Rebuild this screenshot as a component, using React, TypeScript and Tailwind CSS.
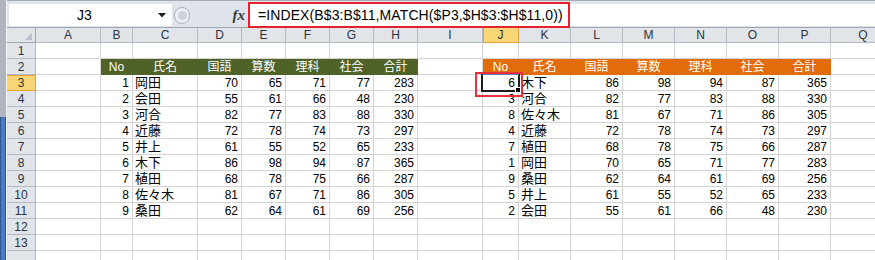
import React from 'react';

type Rec = [number, string, number, number, number, number, number];

const scores: Rec[] = [
  [1, '岡田', 70, 65, 71, 77, 283],
  [2, '会田', 55, 61, 66, 48, 230],
  [3, '河合', 82, 77, 83, 88, 330],
  [4, '近藤', 72, 78, 74, 73, 297],
  [5, '井上', 61, 55, 52, 65, 233],
  [6, '木下', 86, 98, 94, 87, 365],
  [7, '植田', 68, 78, 75, 66, 287],
  [8, '佐々木', 81, 67, 71, 86, 305],
  [9, '桑田', 62, 64, 61, 69, 256],
];

// right table = same data ordered by total
const ranked = [...scores].sort((a, b) => b[6] - a[6]);

const headers = ['No', '氏名', '国語', '算数', '理科', '社会', '合計'];
const columns = ['A', 'B', 'C', 'D', 'E', 'F', 'G', 'H', 'I', 'J', 'K', 'L', 'M', 'N', 'O', 'P', 'Q'];
const rows = [1, 2, 3, 4, 5, 6, 7, 8, 9, 10, 11, 12, 13, 14];

const ColHeader = ({ letter }: { letter: string }) => {
  const active = letter === 'J';
  return (
    <div
      className={`flex h-[15px] items-center justify-center border-r border-b text-[12px] leading-none text-[#2b3440] ${
        active
          ? 'border-[#e3a13a] bg-[#f8d675] shadow-[inset_1px_0_0_#e3a13a]'
          : 'border-[#b4bac3] bg-[#e1e5ea]'
      }`}
    >
      {letter}
    </div>
  );
};

const RowHeader = ({ n }: { n: number }) => {
  const active = n === 3;
  return (
    <div
      className={`flex h-[16px] items-center justify-center border-r border-b text-[12px] leading-none text-[#2b3440] ${
        active
          ? 'border-[#e3a13a] bg-[#f8d675] shadow-[inset_0_1px_0_#e3a13a]'
          : 'border-[#b4bac3] bg-[#e1e5ea]'
      }`}
    >
      {/* last row is cut by the window edge */}
      {n < 14 ? n : ''}
    </div>
  );
};

const Cell = ({ row, col }: { row: number; col: number }) => {
  let text: string | number = '';
  let kind: 'empty' | 'green' | 'orange' | 'num' | 'name' = 'empty';

  if (row === 2 && col >= 1 && col <= 7) {
    text = headers[col - 1];
    kind = 'green';
  } else if (row === 2 && col >= 9 && col <= 15) {
    text = headers[col - 9];
    kind = 'orange';
  } else if (row >= 3 && row <= 11 && col >= 1 && col <= 7) {
    text = scores[row - 3][col - 1];
    kind = col === 2 ? 'name' : 'num';
  } else if (row >= 3 && row <= 11 && col >= 9 && col <= 15) {
    text = ranked[row - 3][col - 9];
    kind = col === 10 ? 'name' : 'num';
  }

  const isActive = row === 3 && col === 9;

  let cls = 'h-[16px] border-r border-b whitespace-nowrap ';
  if (kind === 'green') {
    cls += 'flex items-center justify-center border-[#4f6228] bg-[#4f6228] text-[12px] text-white';
  } else if (kind === 'orange') {
    cls += 'flex items-center justify-center border-[#e26b0a] bg-[#e26b0a] text-[12px] text-white';
  } else if (kind === 'num') {
    cls += 'flex items-center justify-end border-[#d4d4d4] pr-[3px] pt-[1px] text-[12px] text-black';
  } else if (kind === 'name') {
    cls += 'flex items-center border-[#d4d4d4] pl-[2px] text-[13px] text-black';
  } else {
    cls += 'border-[#d4d4d4]';
  }
  if (isActive) cls += ' relative';

  return (
    <div className={cls}>
      {text}
      {isActive && (
        <>
          <div className="absolute -left-[2px] -top-[2px] z-10 h-[19px] w-[39px] border-2 border-[#1d1d1d] border-t-[#5a80b8]" />
          <div className="absolute -bottom-[3px] -right-[3px] z-10 h-[6px] w-[6px] border border-white bg-black" />
          <div className="absolute -left-[8px] -top-[3px] z-20 h-[25px] w-[48px] border-2 border-[#e8303a]" />
        </>
      )}
    </div>
  );
};

const App = () => {
  return (
    <div className="flex h-[260px] w-[875px] overflow-hidden bg-white font-['Liberation_Sans','Noto_Sans_CJK_JP',sans-serif]">
      {/* window edge */}
      <div className="flex w-[7px] shrink-0 flex-col border-r border-[#f2f4f7]">
        <div className="h-[117px] bg-[#aeb5bf]" />
        <div className="flex-1 border-x border-[#2d5592] bg-[#4c7cc2]" />
      </div>

      <div className="flex min-w-0 flex-1 flex-col">
        {/* ribbon bottom */}
        <div className="flex h-[5px] border-b border-[#a4acb6] bg-[#eef1f4]">
          <div className="w-[87px] border-r border-[#b8bec7]" />
          <div className="w-[253px] border-r border-[#b8bec7]" />
          <div className="w-[293px] border-r border-[#b8bec7]" />
          <div className="w-[143px] border-r border-[#b8bec7]" />
        </div>

        {/* formula bar */}
        <div className="relative flex h-[27px] border-b border-[#9da6b1] bg-[#dfe4ea] pt-[3px] pb-[1px]">
          <div className="ml-[2px] flex w-[163px] items-center bg-white">
            <span className="flex-1 pl-[2px] text-center text-[14px] text-black">J3</span>
            <svg width="8" height="5" viewBox="0 0 8 5" className="mr-[6px]">
              <path d="M0 0h8L4 4.5z" fill="#1f1f1f" />
            </svg>
          </div>
          <div className="flex w-[76px] items-center">
            <div className="ml-[2px] flex h-[17px] w-[16px] items-center justify-center rounded-full border border-[#a8b0ba] bg-[#eef1f4]">
              <div className="h-[9px] w-[9px] rounded-full bg-[#cdd3da]" />
            </div>
            <span className="ml-auto mr-[3px] font-['Liberation_Serif',serif] text-[15px] font-bold italic text-[#3a3a3a]">
              fx
            </span>
          </div>
          <div className="flex flex-1 items-center bg-white pl-[10px] text-[14px] tracking-[0.1px] text-black">
            =INDEX(B$3:B$11,MATCH($P3,$H$3:$H$11,0))
          </div>
          <div className="absolute left-[241px] top-[1px] h-[26px] w-[322px] border-2 border-[#e3222b]" />
        </div>

        {/* sheet */}
        <div className="grid w-max grid-cols-[29px_65px_32px_65px_44px_44px_44px_44px_44px_65px_36px_52px_52px_52px_52px_52px_52px_65px]">
          <div className="relative h-[15px] border-r border-b border-[#9ca5b0] bg-[#e1e5ea]">
            <svg width="7" height="7" viewBox="0 0 7 7" className="absolute bottom-[2px] right-[3px]">
              <path d="M7 0V7H0z" fill="#b9c0c9" />
            </svg>
          </div>
          {columns.map((c) => (
            <ColHeader key={c} letter={c} />
          ))}

          {rows.map((r) => (
            <React.Fragment key={r}>
              <RowHeader n={r} />
              {columns.map((c, ci) => (
                <Cell key={c} row={r} col={ci} />
              ))}
            </React.Fragment>
          ))}
        </div>
      </div>
    </div>
  );
};

export default App;
